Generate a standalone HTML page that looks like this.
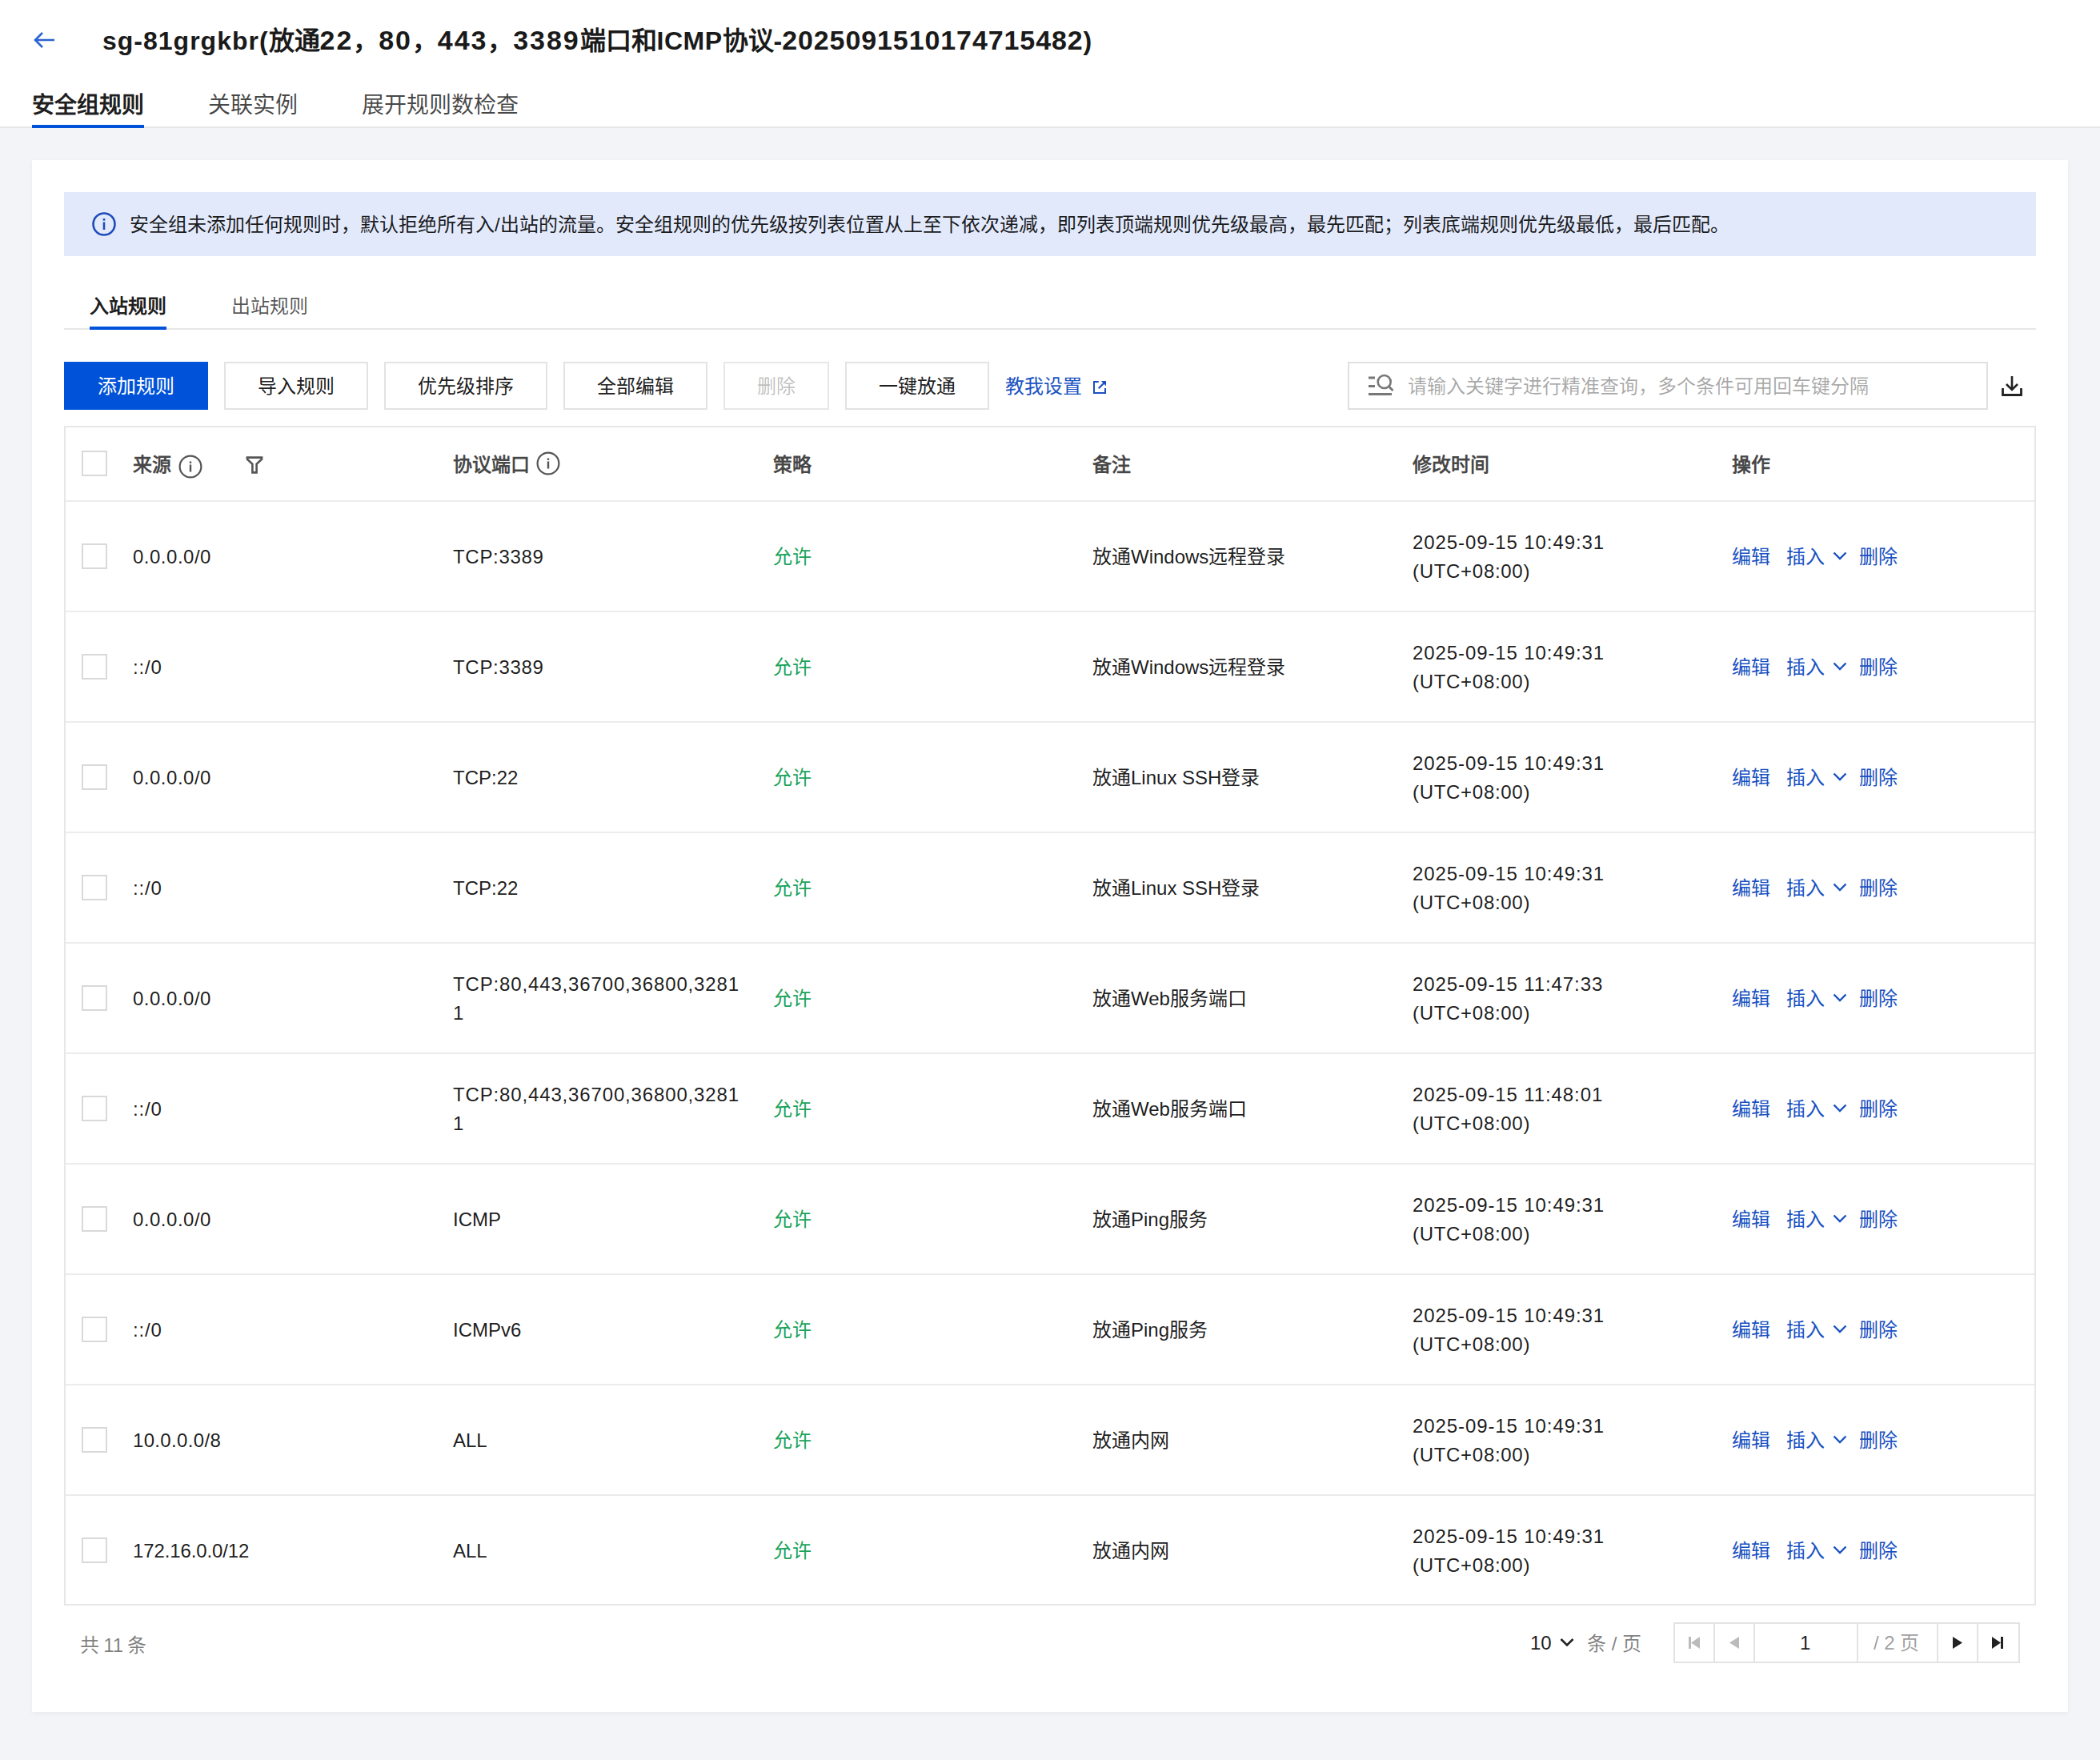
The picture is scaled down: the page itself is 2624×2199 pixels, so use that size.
<!DOCTYPE html>
<html lang="zh-CN">
<head>
<meta charset="utf-8">
<style>
html,body{margin:0;padding:0}
body{width:2624px;height:2199px;background:#f3f4f7;font-family:"Liberation Sans",sans-serif;position:relative;overflow:hidden;color:rgba(0,0,0,.9);font-size:24px}
.a{position:absolute;white-space:nowrap}
.hdr{position:absolute;left:0;top:0;width:2624px;height:158px;background:#fff;border-bottom:2px solid #e7e7e7}
.title{left:128px;top:25px;font-size:32px;font-weight:bold;line-height:50px;color:#1a1a1a}
.dg{letter-spacing:1.9px;font-size:34px}
.dg2{letter-spacing:.9px;font-size:34px}
.tab{top:110px;font-size:28px;line-height:44px;color:rgba(0,0,0,.72)}
.tab.on{color:rgba(0,0,0,.9);font-weight:bold}
.card{position:absolute;left:40px;top:200px;width:2544px;height:1939px;background:#fff;box-shadow:0 2px 6px rgba(0,0,0,.045)}
.alert{position:absolute;left:80px;top:240px;width:2464px;height:80px;background:#e2e9fb}
.stab{top:363px;font-size:24px;line-height:40px;color:rgba(0,0,0,.66)}
.stab.on{color:rgba(0,0,0,.9);font-weight:bold}
.btn{position:absolute;top:452px;height:60px;box-sizing:border-box;border:2px solid #e3e3e3;background:#fff;line-height:58px;text-align:center;font-size:24px;color:rgba(0,0,0,.9)}
.btn.pri{background:#0052d9;border-color:#0052d9;color:#fff}
.btn.dis{color:rgba(0,0,0,.26);border-color:#e7e7e7}
.link{color:#1a52c2}
.tbl{position:absolute;left:80px;top:532px;width:2464px;height:1474px;box-sizing:border-box;border:2px solid #e7e7e7}
.hline{position:absolute;left:82px;width:2460px;height:2px;background:#ececec}
.cb{position:absolute;left:102px;width:32px;height:32px;box-sizing:border-box;border:2px solid #d9d9d9;background:#fff}
.th{font-weight:bold;color:rgba(0,0,0,.72);line-height:40px;margin-top:1px}
.td{line-height:36px;margin-top:1px}
.ok{color:#1ba35a}
</style>
</head>
<body>
<div class="hdr"></div>
<svg class="a" style="left:40px;top:38px" width="30" height="24" viewBox="0 0 30 24"><path d="M28 12H4M13 3L4 12l9 9" fill="none" stroke="#2b63d0" stroke-width="2.6"/></svg>
<div class="a title"><span style="letter-spacing:1px">sg-81grgkbr(</span>放通<span class="dg">22</span>，<span class="dg">80</span>，<span class="dg">443</span>，<span class="dg">3389</span>端口和<span style="letter-spacing:.5px">ICMP</span>协议-<span class="dg2">2025091510174715482</span>)</div>
<div class="a tab on" style="left:40px">安全组规则</div>
<div class="a" style="left:40px;top:156px;width:140px;height:4px;background:#0052d9"></div>
<div class="a tab" style="left:260px">关联实例</div>
<div class="a tab" style="left:452px">展开规则数检查</div>

<div class="card"></div>
<div class="alert"></div>
<svg class="a" style="left:114px;top:264px" width="32" height="32" viewBox="0 0 32 32"><circle cx="16" cy="16" r="13.5" fill="none" stroke="#1f4db8" stroke-width="2.6"/><rect x="14.7" y="9" width="2.6" height="2.6" fill="#1f4db8"/><rect x="14.7" y="13.5" width="2.6" height="9.5" fill="#1f4db8"/></svg>
<div class="a" style="left:162px;top:261px;line-height:40px">安全组未添加任何规则时，默认拒绝所有入/出站的流量。安全组规则的优先级按列表位置从上至下依次递减，即列表顶端规则优先级最高，最先匹配；列表底端规则优先级最低，最后匹配。</div>

<div class="a stab on" style="left:112px">入站规则</div>
<div class="a stab" style="left:289px">出站规则</div>
<div class="a" style="left:80px;top:410px;width:2464px;height:2px;background:#e7e7e7"></div>
<div class="a" style="left:112px;top:408px;width:96px;height:4px;background:#0052d9"></div>

<div class="btn pri" style="left:80px;width:180px">添加规则</div>
<div class="btn" style="left:280px;width:180px">导入规则</div>
<div class="btn" style="left:480px;width:204px">优先级排序</div>
<div class="btn" style="left:704px;width:180px">全部编辑</div>
<div class="btn dis" style="left:904px;width:132px">删除</div>
<div class="btn" style="left:1056px;width:180px">一键放通</div>
<div class="a link" style="left:1256px;top:463px;line-height:40px">教我设置</div>
<svg class="a" style="left:1366px;top:476px" width="16" height="16" viewBox="0 0 16 16"><path d="M6.8 1H1v14h14V9" fill="none" stroke="#1a50c4" stroke-width="2"/><path d="M16 0H9.8L16 6.2z" fill="#1a50c4"/><path d="M13.5 2.5L6.8 9.2" stroke="#1a50c4" stroke-width="2.2"/></svg>

<div class="a" style="left:1684px;top:452px;width:800px;height:60px;box-sizing:border-box;border:2px solid #e0e0e0;background:#fff"></div>
<svg class="a" style="left:1708px;top:466px" width="36" height="30" viewBox="0 0 36 30"><path d="M2 6h8M2 16.5h8M2 26.5h29" stroke="#777" stroke-width="3"/><circle cx="21.7" cy="11" r="8" fill="none" stroke="#777" stroke-width="2.6"/><path d="M27.5 17l5 5" stroke="#777" stroke-width="2.8"/></svg>
<div class="a" style="left:1759px;top:463px;line-height:40px;color:rgba(0,0,0,.35)">请输入关键字进行精准查询，多个条件可用回车键分隔</div>
<svg class="a" style="left:2500px;top:468px" width="28" height="28" viewBox="0 0 28 28"><path d="M14 2v17M7 12l7 7 7-7" fill="none" stroke="#222" stroke-width="2.6"/><path d="M2.5 17v8.5h23V17" fill="none" stroke="#222" stroke-width="2.8"/></svg>

<div class="tbl"></div>
<div class="cb" style="top:563px"></div>
<div class="a th" style="left:166px;top:560px">来源</div>
<svg class="a" style="left:222px;top:567px" width="32" height="32" viewBox="0 0 32 32"><circle cx="16" cy="16" r="13.4" fill="none" stroke="#555" stroke-width="2.2"/><rect x="14.8" y="9.5" width="2.4" height="2.4" fill="#555"/><rect x="14.8" y="13.5" width="2.4" height="9" fill="#555"/></svg>
<svg class="a" style="left:306px;top:569px" width="24" height="24" viewBox="0 0 24 24"><path d="M2.9 2.6H21.1V4.6L14.6 10.8V21.4H9.4V10.8L2.9 4.6z" fill="none" stroke="#555" stroke-width="2.6" stroke-linejoin="miter"/></svg>
<div class="a th" style="left:566px;top:560px">协议端口</div>
<svg class="a" style="left:669px;top:563px" width="32" height="32" viewBox="0 0 32 32"><circle cx="16" cy="16" r="13.4" fill="none" stroke="#555" stroke-width="2.2"/><rect x="14.8" y="9.5" width="2.4" height="2.4" fill="#555"/><rect x="14.8" y="13.5" width="2.4" height="9" fill="#555"/></svg>
<div class="a th" style="left:966px;top:560px">策略</div>
<div class="a th" style="left:1365px;top:560px">备注</div>
<div class="a th" style="left:1765px;top:560px">修改时间</div>
<div class="a th" style="left:2164px;top:560px">操作</div>
<div class="hline" style="top:625px"></div>
<div class="cb" style="top:679px"></div>
<div class="a td" style="left:166px;top:677px;letter-spacing:0.5px">0.0.0.0/0</div>
<div class="a td" style="left:566px;top:677px;letter-spacing:0.7px">TCP:3389</div>
<div class="a td ok" style="left:966px;top:677px">允许</div>
<div class="a td" style="left:1365px;top:677px">放通Windows远程登录</div>
<div class="a td" style="left:1765px;top:659px"><span style="letter-spacing:.9px">2025-09-15 10:49:31</span><br><span style="letter-spacing:.7px">(UTC+08:00)</span></div>
<div class="a td link" style="left:2164px;top:677px">编辑</div>
<div class="a td link" style="left:2232px;top:677px">插入</div>
<svg class="a" style="left:2289px;top:687px" width="20" height="14" viewBox="0 0 20 14"><path d="M2.5 3.5l7.5 7.5 7.5-7.5" fill="none" stroke="#1a52c2" stroke-width="2.4"/></svg>
<div class="a td link" style="left:2323px;top:677px">删除</div>
<div class="hline" style="top:763px"></div>
<div class="cb" style="top:817px"></div>
<div class="a td" style="left:166px;top:815px;letter-spacing:0.8px">::/0</div>
<div class="a td" style="left:566px;top:815px;letter-spacing:0.7px">TCP:3389</div>
<div class="a td ok" style="left:966px;top:815px">允许</div>
<div class="a td" style="left:1365px;top:815px">放通Windows远程登录</div>
<div class="a td" style="left:1765px;top:797px"><span style="letter-spacing:.9px">2025-09-15 10:49:31</span><br><span style="letter-spacing:.7px">(UTC+08:00)</span></div>
<div class="a td link" style="left:2164px;top:815px">编辑</div>
<div class="a td link" style="left:2232px;top:815px">插入</div>
<svg class="a" style="left:2289px;top:825px" width="20" height="14" viewBox="0 0 20 14"><path d="M2.5 3.5l7.5 7.5 7.5-7.5" fill="none" stroke="#1a52c2" stroke-width="2.4"/></svg>
<div class="a td link" style="left:2323px;top:815px">删除</div>
<div class="hline" style="top:901px"></div>
<div class="cb" style="top:955px"></div>
<div class="a td" style="left:166px;top:953px;letter-spacing:0.5px">0.0.0.0/0</div>
<div class="a td" style="left:566px;top:953px;letter-spacing:0px">TCP:22</div>
<div class="a td ok" style="left:966px;top:953px">允许</div>
<div class="a td" style="left:1365px;top:953px">放通Linux SSH登录</div>
<div class="a td" style="left:1765px;top:935px"><span style="letter-spacing:.9px">2025-09-15 10:49:31</span><br><span style="letter-spacing:.7px">(UTC+08:00)</span></div>
<div class="a td link" style="left:2164px;top:953px">编辑</div>
<div class="a td link" style="left:2232px;top:953px">插入</div>
<svg class="a" style="left:2289px;top:963px" width="20" height="14" viewBox="0 0 20 14"><path d="M2.5 3.5l7.5 7.5 7.5-7.5" fill="none" stroke="#1a52c2" stroke-width="2.4"/></svg>
<div class="a td link" style="left:2323px;top:953px">删除</div>
<div class="hline" style="top:1039px"></div>
<div class="cb" style="top:1093px"></div>
<div class="a td" style="left:166px;top:1091px;letter-spacing:0.8px">::/0</div>
<div class="a td" style="left:566px;top:1091px;letter-spacing:0px">TCP:22</div>
<div class="a td ok" style="left:966px;top:1091px">允许</div>
<div class="a td" style="left:1365px;top:1091px">放通Linux SSH登录</div>
<div class="a td" style="left:1765px;top:1073px"><span style="letter-spacing:.9px">2025-09-15 10:49:31</span><br><span style="letter-spacing:.7px">(UTC+08:00)</span></div>
<div class="a td link" style="left:2164px;top:1091px">编辑</div>
<div class="a td link" style="left:2232px;top:1091px">插入</div>
<svg class="a" style="left:2289px;top:1101px" width="20" height="14" viewBox="0 0 20 14"><path d="M2.5 3.5l7.5 7.5 7.5-7.5" fill="none" stroke="#1a52c2" stroke-width="2.4"/></svg>
<div class="a td link" style="left:2323px;top:1091px">删除</div>
<div class="hline" style="top:1177px"></div>
<div class="cb" style="top:1231px"></div>
<div class="a td" style="left:166px;top:1229px;letter-spacing:0.5px">0.0.0.0/0</div>
<div class="a td" style="left:566px;top:1211px;letter-spacing:.85px">TCP:80,443,36700,36800,3281<br>1</div>
<div class="a td ok" style="left:966px;top:1229px">允许</div>
<div class="a td" style="left:1365px;top:1229px">放通Web服务端口</div>
<div class="a td" style="left:1765px;top:1211px"><span style="letter-spacing:.9px">2025-09-15 11:47:33</span><br><span style="letter-spacing:.7px">(UTC+08:00)</span></div>
<div class="a td link" style="left:2164px;top:1229px">编辑</div>
<div class="a td link" style="left:2232px;top:1229px">插入</div>
<svg class="a" style="left:2289px;top:1239px" width="20" height="14" viewBox="0 0 20 14"><path d="M2.5 3.5l7.5 7.5 7.5-7.5" fill="none" stroke="#1a52c2" stroke-width="2.4"/></svg>
<div class="a td link" style="left:2323px;top:1229px">删除</div>
<div class="hline" style="top:1315px"></div>
<div class="cb" style="top:1369px"></div>
<div class="a td" style="left:166px;top:1367px;letter-spacing:0.8px">::/0</div>
<div class="a td" style="left:566px;top:1349px;letter-spacing:.85px">TCP:80,443,36700,36800,3281<br>1</div>
<div class="a td ok" style="left:966px;top:1367px">允许</div>
<div class="a td" style="left:1365px;top:1367px">放通Web服务端口</div>
<div class="a td" style="left:1765px;top:1349px"><span style="letter-spacing:.9px">2025-09-15 11:48:01</span><br><span style="letter-spacing:.7px">(UTC+08:00)</span></div>
<div class="a td link" style="left:2164px;top:1367px">编辑</div>
<div class="a td link" style="left:2232px;top:1367px">插入</div>
<svg class="a" style="left:2289px;top:1377px" width="20" height="14" viewBox="0 0 20 14"><path d="M2.5 3.5l7.5 7.5 7.5-7.5" fill="none" stroke="#1a52c2" stroke-width="2.4"/></svg>
<div class="a td link" style="left:2323px;top:1367px">删除</div>
<div class="hline" style="top:1453px"></div>
<div class="cb" style="top:1507px"></div>
<div class="a td" style="left:166px;top:1505px;letter-spacing:0.5px">0.0.0.0/0</div>
<div class="a td" style="left:566px;top:1505px;letter-spacing:0px">ICMP</div>
<div class="a td ok" style="left:966px;top:1505px">允许</div>
<div class="a td" style="left:1365px;top:1505px">放通Ping服务</div>
<div class="a td" style="left:1765px;top:1487px"><span style="letter-spacing:.9px">2025-09-15 10:49:31</span><br><span style="letter-spacing:.7px">(UTC+08:00)</span></div>
<div class="a td link" style="left:2164px;top:1505px">编辑</div>
<div class="a td link" style="left:2232px;top:1505px">插入</div>
<svg class="a" style="left:2289px;top:1515px" width="20" height="14" viewBox="0 0 20 14"><path d="M2.5 3.5l7.5 7.5 7.5-7.5" fill="none" stroke="#1a52c2" stroke-width="2.4"/></svg>
<div class="a td link" style="left:2323px;top:1505px">删除</div>
<div class="hline" style="top:1591px"></div>
<div class="cb" style="top:1645px"></div>
<div class="a td" style="left:166px;top:1643px;letter-spacing:0.8px">::/0</div>
<div class="a td" style="left:566px;top:1643px;letter-spacing:0px">ICMPv6</div>
<div class="a td ok" style="left:966px;top:1643px">允许</div>
<div class="a td" style="left:1365px;top:1643px">放通Ping服务</div>
<div class="a td" style="left:1765px;top:1625px"><span style="letter-spacing:.9px">2025-09-15 10:49:31</span><br><span style="letter-spacing:.7px">(UTC+08:00)</span></div>
<div class="a td link" style="left:2164px;top:1643px">编辑</div>
<div class="a td link" style="left:2232px;top:1643px">插入</div>
<svg class="a" style="left:2289px;top:1653px" width="20" height="14" viewBox="0 0 20 14"><path d="M2.5 3.5l7.5 7.5 7.5-7.5" fill="none" stroke="#1a52c2" stroke-width="2.4"/></svg>
<div class="a td link" style="left:2323px;top:1643px">删除</div>
<div class="hline" style="top:1729px"></div>
<div class="cb" style="top:1783px"></div>
<div class="a td" style="left:166px;top:1781px;letter-spacing:0.33px">10.0.0.0/8</div>
<div class="a td" style="left:566px;top:1781px;letter-spacing:0px">ALL</div>
<div class="a td ok" style="left:966px;top:1781px">允许</div>
<div class="a td" style="left:1365px;top:1781px">放通内网</div>
<div class="a td" style="left:1765px;top:1763px"><span style="letter-spacing:.9px">2025-09-15 10:49:31</span><br><span style="letter-spacing:.7px">(UTC+08:00)</span></div>
<div class="a td link" style="left:2164px;top:1781px">编辑</div>
<div class="a td link" style="left:2232px;top:1781px">插入</div>
<svg class="a" style="left:2289px;top:1791px" width="20" height="14" viewBox="0 0 20 14"><path d="M2.5 3.5l7.5 7.5 7.5-7.5" fill="none" stroke="#1a52c2" stroke-width="2.4"/></svg>
<div class="a td link" style="left:2323px;top:1781px">删除</div>
<div class="hline" style="top:1867px"></div>
<div class="cb" style="top:1921px"></div>
<div class="a td" style="left:166px;top:1919px;letter-spacing:-0.12px">172.16.0.0/12</div>
<div class="a td" style="left:566px;top:1919px;letter-spacing:0px">ALL</div>
<div class="a td ok" style="left:966px;top:1919px">允许</div>
<div class="a td" style="left:1365px;top:1919px">放通内网</div>
<div class="a td" style="left:1765px;top:1901px"><span style="letter-spacing:.9px">2025-09-15 10:49:31</span><br><span style="letter-spacing:.7px">(UTC+08:00)</span></div>
<div class="a td link" style="left:2164px;top:1919px">编辑</div>
<div class="a td link" style="left:2232px;top:1919px">插入</div>
<svg class="a" style="left:2289px;top:1929px" width="20" height="14" viewBox="0 0 20 14"><path d="M2.5 3.5l7.5 7.5 7.5-7.5" fill="none" stroke="#1a52c2" stroke-width="2.4"/></svg>
<div class="a td link" style="left:2323px;top:1919px">删除</div>
<div class="a" style="left:100px;top:2036px;line-height:40px;color:rgba(0,0,0,.5);word-spacing:-1.5px">共 11 条</div>
<div class="a" style="left:1912px;top:2033px;line-height:40px">10</div>
<svg class="a" style="left:1948px;top:2044px" width="20" height="16" viewBox="0 0 20 16"><path d="M2.5 4l7.5 7.5 7.5-7.5" fill="none" stroke="#222" stroke-width="2.6"/></svg>
<div class="a" style="left:1983px;top:2034px;line-height:40px;color:rgba(0,0,0,.5)">条 / 页</div>
<div class="a" style="left:2091px;top:2027px;width:433px;height:51px;box-sizing:border-box;border:2px solid #e3e3e3;background:#fff"></div>
<div class="a" style="left:2141px;top:2027px;width:2px;height:51px;background:#e3e3e3"></div>
<div class="a" style="left:2191px;top:2027px;width:2px;height:51px;background:#e3e3e3"></div>
<div class="a" style="left:2320px;top:2027px;width:2px;height:51px;background:#e3e3e3"></div>
<div class="a" style="left:2420px;top:2027px;width:2px;height:51px;background:#e3e3e3"></div>
<div class="a" style="left:2470px;top:2027px;width:2px;height:51px;background:#e3e3e3"></div>
<svg class="a" style="left:2108px;top:2044px" width="18" height="18" viewBox="0 0 18 18"><rect x="2" y="1" width="3" height="15" fill="#bbb"/><path d="M16 1v15L5 8.5z" fill="#bbb"/></svg>
<svg class="a" style="left:2158px;top:2044px" width="18" height="18" viewBox="0 0 18 18"><path d="M15 1v15L3 8.5z" fill="#bbb"/></svg>
<div class="a" style="left:2249px;top:2033px;line-height:40px">1</div>
<div class="a" style="left:2341px;top:2033px;line-height:40px;color:rgba(0,0,0,.4)">/ 2 页</div>
<svg class="a" style="left:2438px;top:2044px" width="18" height="18" viewBox="0 0 18 18"><path d="M2 1v15l12-7.5z" fill="#222"/></svg>
<svg class="a" style="left:2487px;top:2044px" width="18" height="18" viewBox="0 0 18 18"><path d="M2 1v15l11-7.5z" fill="#222"/><rect x="13" y="1" width="3" height="15" fill="#222"/></svg>
</body>
</html>
